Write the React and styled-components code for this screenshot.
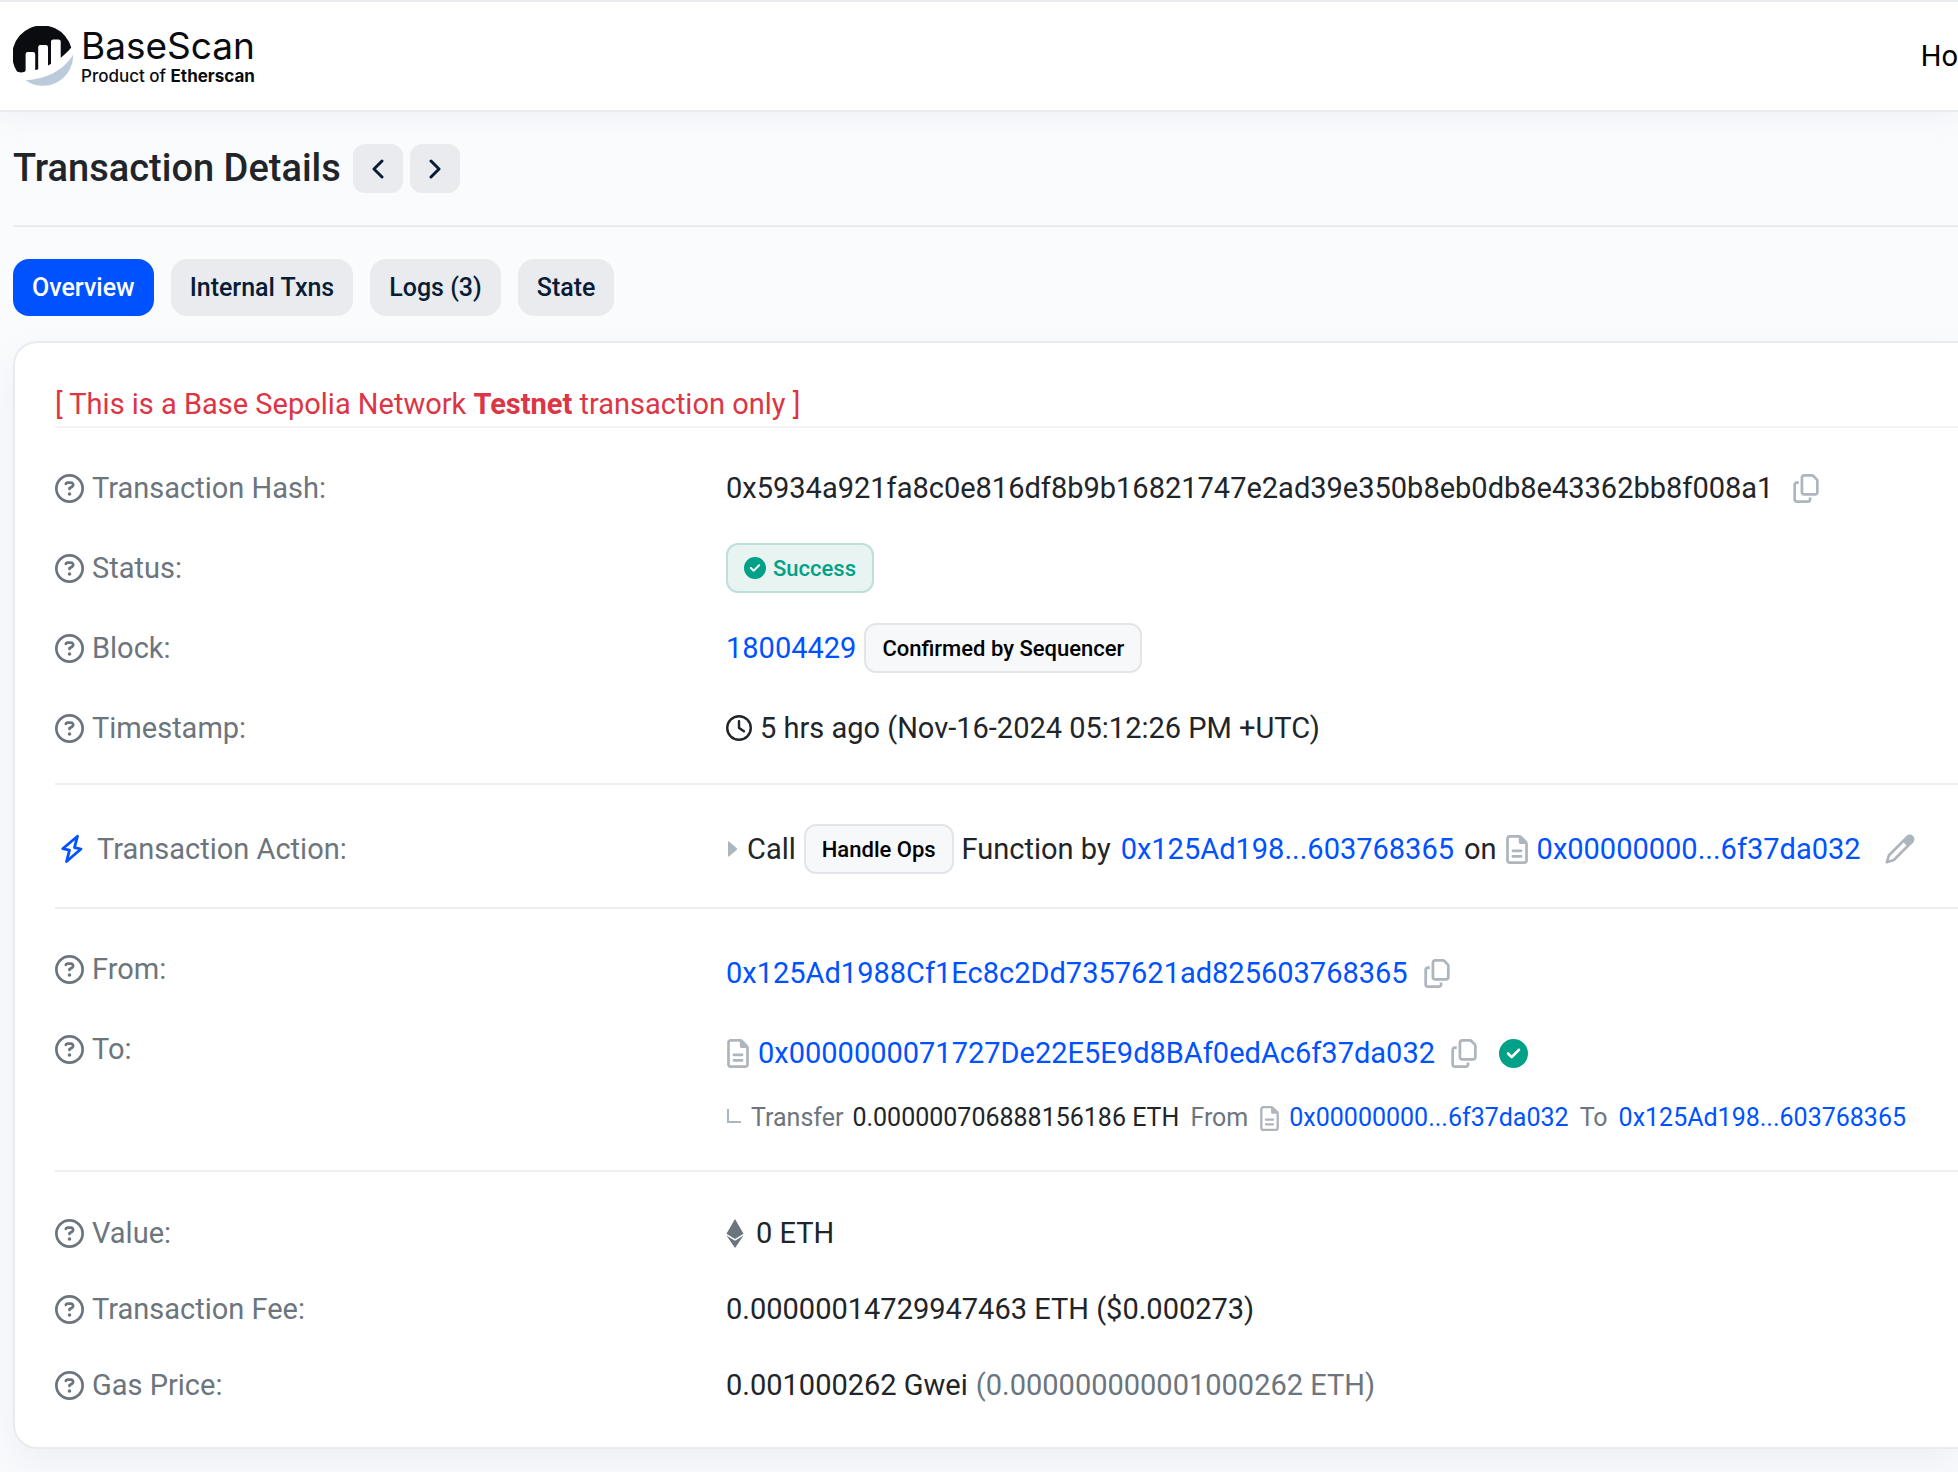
import React from "react"
import styled, { createGlobalStyle } from 'styled-components'
import {
    FaRegCircleQuestion,
    FaRegClock,
    FaRegCopy,
    FaRegFileLines,
    FaCircleCheck,
    FaEthereum,
} from 'react-icons/fa6'

const colors = {
    primary: '#0052ff',
    dark: '#212529',
    muted: '#6c757d',
    faint: '#adb5bd',
    border: '#e9ecef',
    success: '#00a186',
    danger: '#dc3545',
}

const GlobalStyle = createGlobalStyle`
    * {
        box-sizing: border-box;
    }
    body {
        margin: 0;
        background-color: #fafbfd;
        color: ${colors.dark};
        font-family: Roboto, sans-serif;
        font-size: 29px;
        line-height: 43px;
        overflow-x: hidden;
    }
    h1, dl, dt, dd, p {
        margin: 0;
    }
    a {
        color: ${colors.primary};
        text-decoration: none;
    }
    button {
        font-family: inherit;
        cursor: pointer;
    }
    svg {
        display: block;
        flex-shrink: 0;
    }
`

const StyledHeader = styled.header`
    display: flex;
    align-items: center;
    justify-content: space-between;
    height: 112px;
    padding-left: 13px;
    background-color: white;
    border-top: 2px solid ${colors.border};
    border-bottom: 2px solid ${colors.border};
    box-shadow: 0 8px 24px rgba(189, 197, 209, 0.15);
`

const StyledBrand = styled.a`
    display: flex;
    align-items: center;
    gap: 8px;
    color: #0a0c10;
    font-family: Inter, sans-serif;
`

const StyledBrandText = styled.span`
    display: flex;
    flex-direction: column;
`

const StyledBrandName = styled.span`
    font-size: 37px;
    line-height: 40px;
`

const StyledBrandNote = styled.span`
    font-size: 17px;
    font-weight: 500;
    line-height: 21px;
`

const StyledNavLink = styled.a`
    color: black;
`

const StyledMain = styled.main`
    padding: 0 0 24px 13px;
`

const StyledTitleBar = styled.div`
    display: flex;
    align-items: center;
    gap: 12px;
    height: 115px;
    border-bottom: 2px solid ${colors.border};
`

const StyledTitle = styled.h1`
    font-size: 38px;
    font-weight: 500;
`

const StyledPager = styled.div`
    display: flex;
    gap: 7px;
`

const StyledPageButton = styled.button`
    display: flex;
    align-items: center;
    justify-content: center;
    width: 50px;
    height: 49px;
    padding: 0;
    border: none;
    border-radius: 12px;
    background-color: #e9ebef;
    color: #081d35;
`

const StyledTabs = styled.nav`
    display: flex;
    gap: 17px;
    padding: 32px 0 25px;
`

const StyledTab = styled.button`
    height: 57px;
    padding: 0 19px;
    border: none;
    border-radius: 16px;
    background-color: ${props => (props.$active ? colors.primary : '#e9ebef')};
    color: ${props => (props.$active ? 'white' : '#081d35')};
    font-size: 25px;
    font-weight: 500;
`

const StyledCard = styled.section`
    padding: 40px 0 40px 40px;
    border: 2px solid ${colors.border};
    border-right: none;
    border-radius: 24px 0 0 24px;
    background-color: white;
    box-shadow: 0 16px 38px rgba(189, 197, 209, 0.2);
`

const StyledNotice = styled.p`
    color: ${colors.danger};
    border-bottom: 2px solid #f0f2f4;
`

const StyledGroup = styled.dl`
    display: flex;
    flex-direction: column;
    gap: 30px;
    padding: 39px 0 33px;
    border-top: 2px solid #edeff1;
`

const StyledFirstGroup = styled(StyledGroup)`
    padding: 35px 0 30px;
    border-top: none;
`

const StyledLastGroup = styled(StyledGroup)`
    gap: 32px;
    padding-bottom: 0;
`

const StyledRow = styled.div`
    display: grid;
    grid-template-columns: 671px 1fr;
    align-items: ${props => (props.$top ? 'start' : 'center')};
`

const StyledLabel = styled.dt`
    display: flex;
    align-items: center;
    gap: 8px;
    color: ${colors.muted};
`

const StyledValue = styled.dd`
    display: flex;
    flex-direction: column;
    gap: 21px;
    white-space: nowrap;
`

const StyledLine = styled.div`
    display: flex;
    align-items: center;
    gap: 8px;
    min-height: ${props => (props.$compact ? '44px' : '50px')};
`

const StyledTransfer = styled.div`
    display: flex;
    align-items: center;
    gap: 9px;
    font-size: 25px;
    line-height: 38px;
`

const StyledPair = styled.span`
    display: flex;
    align-items: center;
    gap: ${props => props.$gap || '8px'};
    margin-right: 2px;
`

const StyledMuted = styled.span`
    color: ${colors.muted};
`

const StyledVerified = styled.span`
    margin-left: 14px;
    color: ${colors.success};
`

const StyledFileIcon = styled(FaRegFileLines)`
    width: ${props => (props.size > 25 ? '24px' : '21px')};
    color: ${colors.faint};
`

const StyledCopyIcon = styled(FaRegCopy)`
    width: 26px;
`

const StyledEthIcon = styled(FaEthereum)`
    width: 18px;
    color: ${colors.muted};
`

const StyledIconButton = styled.button`
    padding: 0;
    margin-left: ${props => (props.$far ? '16px' : '8px')};
    border: none;
    background: none;
    color: ${colors.faint};
`

const StyledBadge = styled.span`
    display: inline-flex;
    align-items: center;
    gap: 7px;
    height: 50px;
    padding: 0 16px;
    border: 2px solid ${props => (props.$success ? '#bfe0d9' : '#e3e5e8')};
    border-radius: 12px;
    background-color: ${props => (props.$success ? '#e8f4f2' : '#f7f8f9')};
    color: ${props => (props.$success ? colors.success : 'black')};
    font-size: 22px;
    font-weight: 500;
`

function Logo() {
    return (
        <svg width="60" height="60" viewBox="0 0 60 60" aria-hidden="true">
            <path
                fill="#0a0c10"
                d="M4 45.6A30 30 0 1 1 58.2 21.5C55 25.6 51.4 29 47.7 31.7V15.6a2.2 2.2 0 0 0-2.2-2.2H40.2a2.2 2.2 0 0 0-2.2 2.2V37.8C37 38.4 36 39 35 39.5V21.2a2.2 2.2 0 0 0-2.2-2.2H27.4a2.2 2.2 0 0 0-2.2 2.2V43.2C24.2 43.5 23.2 43.8 22.2 44V28.2a2.2 2.2 0 0 0-2.2-2.2H14.8a2.2 2.2 0 0 0-2.2 2.2V44.5C12.6 46.6 6 47 4 45.6z"
            />
            <path fill="#bccbdb" d="M12.5 54.2C33 53.5 51 44 60 28.8A30 30 0 0 1 12.5 54.2z" />
        </svg>
    )
}

function Chevron({ right }) {
    return (
        <svg width="12" height="20" viewBox="0 0 12 20" fill="none" stroke="currentColor" strokeWidth="3" strokeLinecap="round" strokeLinejoin="round">
            <path d={right ? 'M2 2l8 8-8 8' : 'M10 2l-8 8 8 8'} />
        </svg>
    )
}

function Bolt() {
    return (
        <svg width="34" height="30" viewBox="0 0 34 30" fill="none" stroke={colors.primary} strokeWidth="2.8" strokeLinecap="round" strokeLinejoin="round">
            <path d="M22.5 2.2L7.7 14.7L14.5 16.2L11.5 27.5L26 15L19.5 13.6z" />
        </svg>
    )
}

function Pencil() {
    return (
        <svg width="30" height="30" viewBox="0 0 30 30" fill="none" stroke="currentColor" strokeWidth="2.7" strokeLinejoin="round">
            <path d="M19 6.2L4 21.2L1.8 28.2L8.8 26L23.8 11" />
            <path fill="currentColor" d="M18.6 6.6L22.3 2.9a3.3 3.3 0 0 1 4.8 4.8L23.4 11.4z" />
        </svg>
    )
}

function Caret() {
    return (
        <svg width="13" height="18" viewBox="0 0 13 18" fill={colors.faint}>
            <path d="M2 2.5v13q0 2 1.6.5l7-6q1.2-1 0-2l-7-6Q2 .5 2 2.5z" />
        </svg>
    )
}

function Elbow() {
    return (
        <svg width="16" height="18" viewBox="0 0 16 18" fill="none" stroke={colors.faint} strokeWidth="2">
            <path d="M2 0v13h13" />
        </svg>
    )
}

function Label({ children }) {
    return (
        <StyledLabel>
            <FaRegCircleQuestion size={29} />
            {children}
        </StyledLabel>
    )
}

function CopyButton() {
    return (
        <StyledIconButton aria-label="Copy">
            <StyledCopyIcon size={29} />
        </StyledIconButton>
    )
}

const tabs = ['Overview', 'Internal Txns', 'Logs (3)', 'State']

export default function App() {
    return (
        <>
            <GlobalStyle />
            <StyledHeader>
                <StyledBrand href="#">
                    <Logo />
                    <StyledBrandText>
                        <StyledBrandName>BaseScan</StyledBrandName>
                        <StyledBrandNote>Product of <b>Etherscan</b></StyledBrandNote>
                    </StyledBrandText>
                </StyledBrand>
                <StyledNavLink href="#">Ho</StyledNavLink>
            </StyledHeader>
            <StyledMain>
                <StyledTitleBar>
                    <StyledTitle>Transaction Details</StyledTitle>
                    <StyledPager>
                        <StyledPageButton aria-label="Previous"><Chevron /></StyledPageButton>
                        <StyledPageButton aria-label="Next"><Chevron right /></StyledPageButton>
                    </StyledPager>
                </StyledTitleBar>
                <StyledTabs>
                    {tabs.map((tab, i) => (
                        <StyledTab key={tab} $active={i === 0}>{tab}</StyledTab>
                    ))}
                </StyledTabs>
                <StyledCard>
                    <StyledNotice>[ This is a Base Sepolia Network <b>Testnet</b> transaction only ]</StyledNotice>
                    <StyledFirstGroup>
                        <StyledRow>
                            <Label>Transaction Hash:</Label>
                            <StyledValue>
                                <StyledLine>
                                    <StyledPair $gap="12px">
                                        0x5934a921fa8c0e816df8b9b16821747e2ad39e350b8eb0db8e43362bb8f008a1
                                        <CopyButton />
                                    </StyledPair>
                                </StyledLine>
                            </StyledValue>
                        </StyledRow>
                        <StyledRow>
                            <Label>Status:</Label>
                            <StyledValue>
                                <StyledLine>
                                    <StyledBadge $success><FaCircleCheck size={22} />Success</StyledBadge>
                                </StyledLine>
                            </StyledValue>
                        </StyledRow>
                        <StyledRow>
                            <Label>Block:</Label>
                            <StyledValue>
                                <StyledLine>
                                    <a href="#">18004429</a>
                                    <StyledBadge>Confirmed by Sequencer</StyledBadge>
                                </StyledLine>
                            </StyledValue>
                        </StyledRow>
                        <StyledRow>
                            <Label>Timestamp:</Label>
                            <StyledValue>
                                <StyledLine>
                                    <FaRegClock size={26} />
                                    5 hrs ago (Nov-16-2024 05:12:26 PM +UTC)
                                </StyledLine>
                            </StyledValue>
                        </StyledRow>
                    </StyledFirstGroup>
                    <StyledGroup>
                        <StyledRow>
                            <StyledLabel><Bolt />Transaction Action:</StyledLabel>
                            <StyledValue>
                                <StyledLine>
                                    <Caret />
                                    Call
                                    <StyledBadge>Handle Ops</StyledBadge>
                                    <StyledPair $gap="10px">Function by <a href="#">0x125Ad198...603768365</a></StyledPair>
                                    <span>on</span>
                                    <StyledFileIcon size={29} />
                                    <a href="#">0x00000000...6f37da032</a>
                                    <StyledIconButton $far aria-label="Edit"><Pencil /></StyledIconButton>
                                </StyledLine>
                            </StyledValue>
                        </StyledRow>
                    </StyledGroup>
                    <StyledGroup>
                        <StyledRow $top>
                            <Label>From:</Label>
                            <StyledValue>
                                <StyledLine>
                                    <a href="#">0x125Ad1988Cf1Ec8c2Dd7357621ad825603768365</a>
                                    <CopyButton />
                                </StyledLine>
                            </StyledValue>
                        </StyledRow>
                        <StyledRow $top>
                            <Label>To:</Label>
                            <StyledValue>
                                <StyledLine>
                                    <StyledFileIcon size={29} />
                                    <a href="#">0x0000000071727De22E5E9d8BAf0edAc6f37da032</a>
                                    <CopyButton />
                                    <StyledVerified><FaCircleCheck size={29} /></StyledVerified>
                                </StyledLine>
                                <StyledTransfer>
                                    <Elbow />
                                    <StyledMuted>Transfer</StyledMuted>
                                    <StyledPair>0.000000706888156186 ETH</StyledPair>
                                    <StyledPair><StyledMuted>From</StyledMuted></StyledPair>
                                    <StyledFileIcon size={25} />
                                    <StyledPair><a href="#">0x00000000...6f37da032</a></StyledPair>
                                    <StyledPair><StyledMuted>To</StyledMuted></StyledPair>
                                    <a href="#">0x125Ad198...603768365</a>
                                </StyledTransfer>
                            </StyledValue>
                        </StyledRow>
                    </StyledGroup>
                    <StyledLastGroup>
                        <StyledRow>
                            <Label>Value:</Label>
                            <StyledValue>
                                <StyledLine $compact>
                                    <StyledPair $gap="12px"><StyledEthIcon size={29} />0 ETH</StyledPair>
                                </StyledLine>
                            </StyledValue>
                        </StyledRow>
                        <StyledRow>
                            <Label>Transaction Fee:</Label>
                            <StyledValue>
                                <StyledLine $compact>0.00000014729947463 ETH ($0.000273)</StyledLine>
                            </StyledValue>
                        </StyledRow>
                        <StyledRow>
                            <Label>Gas Price:</Label>
                            <StyledValue>
                                <StyledLine $compact>
                                    0.001000262 Gwei
                                    <StyledMuted>(0.000000000001000262 ETH)</StyledMuted>
                                </StyledLine>
                            </StyledValue>
                        </StyledRow>
                    </StyledLastGroup>
                </StyledCard>
            </StyledMain>
        </>
    )
}
